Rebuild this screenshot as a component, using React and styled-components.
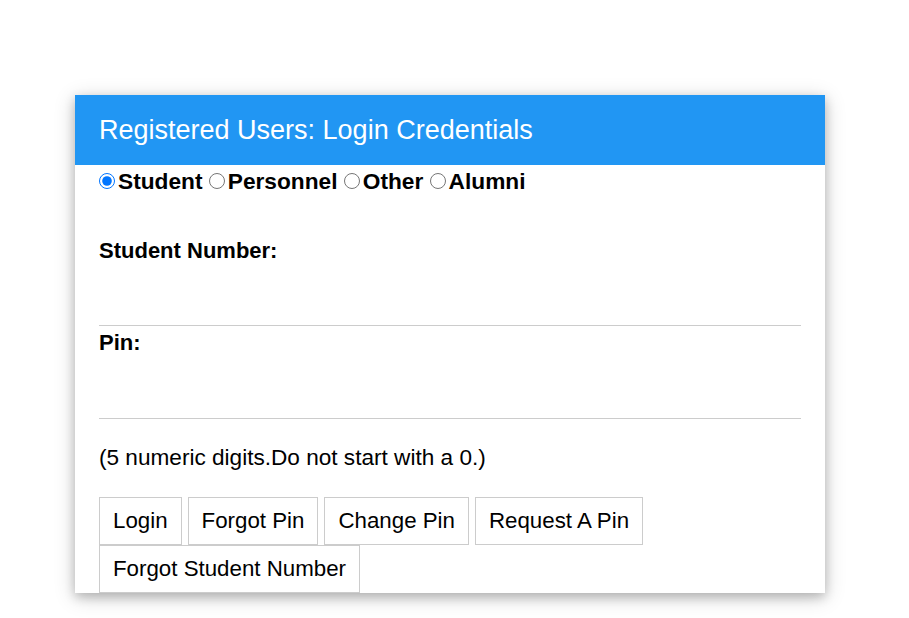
import React from 'react';
import styled, { createGlobalStyle } from 'styled-components';

// #region styled components
const GlobalStyle = createGlobalStyle`
  html, body {
    margin: 0;
    padding: 0;
    background: #fff;
  }
  body {
    font-family: "Liberation Sans", Arial, sans-serif;
    color: #000;
  }
`;

const Page = styled.div`
  padding: 95px 0 40px 75px;
`;

const Card = styled.div`
  width: 750px;
  background: #fff;
  box-shadow: 0 4px 10px 0 rgba(0, 0, 0, 0.2), 0 4px 20px 0 rgba(0, 0, 0, 0.19);
`;

const Header = styled.div`
  height: 70px;
  display: flex;
  align-items: center;
  padding: 0 24px;
  background: #2196f3;
  color: #fff;
  font-size: 27px;
  line-height: 40px;
`;

const Body = styled.form`
  padding: 0 24px;
  font-size: 22px;
  line-height: 33px;
`;

const RadioRow = styled.div`
  font-weight: bold;
  font-size: 22.7px;
  white-space: nowrap;
`;

const RadioLabel = styled.label`
  cursor: pointer;
`;

const Radio = styled.input`
  width: 16px;
  height: 16px;
  margin: 3px 3px 0 0;
`;

const FieldLabel = styled.label`
  display: block;
  font-weight: bold;
  margin-top: ${(p) => (p.$first ? '36px' : '0')};
`;

const TextInput = styled.input`
  display: block;
  box-sizing: border-box;
  width: 100%;
  height: ${(p) => p.$h}px;
  padding: 8px 0;
  border: none;
  border-bottom: 1px solid #ccc;
  font: inherit;
  outline: none;
  background: transparent;
`;

const Hint = styled.p`
  margin: 22px 0 23px;
  font-size: 22.6px;
`;

const Buttons = styled.div`
  display: flex;
  flex-wrap: wrap;
  column-gap: 6px;
`;

const Button = styled.button`
  box-sizing: border-box;
  height: 48px;
  padding: 0 13px;
  border: 1px solid #ccc;
  background: #fff;
  color: #000;
  font-family: inherit;
  font-size: 22.3px;
  cursor: pointer;
`;
// #endregion

const userTypes = ['Student', 'Personnel', 'Other', 'Alumni'];
const actions = [
  'Login',
  'Forgot Pin',
  'Change Pin',
  'Request A Pin',
  'Forgot Student Number',
];

const App = () => {
  return (
    <Page>
      <GlobalStyle />
      <Card>
        <Header>Registered Users: Login Credentials</Header>
        <Body onSubmit={(e) => e.preventDefault()}>
          <RadioRow>
            {userTypes.map((t, i) => (
              <React.Fragment key={t}>
                <RadioLabel>
                  <Radio type="radio" name="usertype" defaultChecked={i === 0} />
                  {t}
                </RadioLabel>{' '}
              </React.Fragment>
            ))}
          </RadioRow>
          <FieldLabel $first>Student Number:</FieldLabel>
          <TextInput type="text" $h={59} />
          <FieldLabel>Pin:</FieldLabel>
          <TextInput type="password" $h={60} />
          <Hint>(5 numeric digits.Do not start with a 0.)</Hint>
          <Buttons>
            {actions.map((a) => (
              <Button key={a} type="button">
                {a}
              </Button>
            ))}
          </Buttons>
        </Body>
      </Card>
    </Page>
  );
};

App.displayName = 'App';

export default App;
